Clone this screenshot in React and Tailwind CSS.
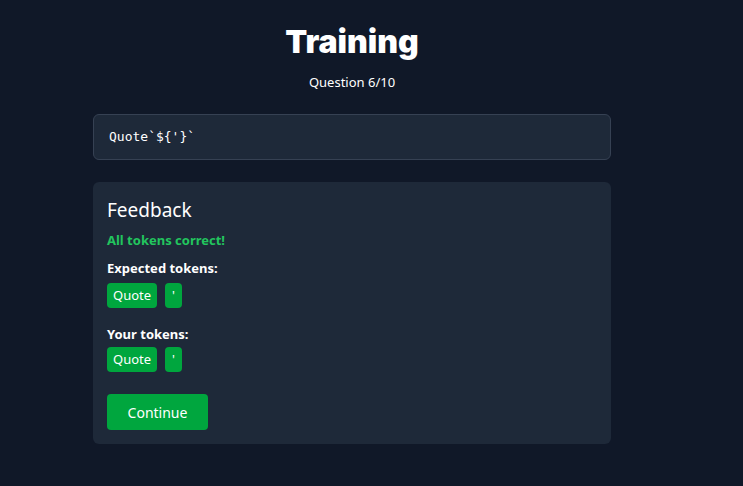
import React from "react";

const EXPECTED = ["Quote", "'"];
const YOURS = ["Quote", "'"];

function Tokens({ items }) {
  return (
    <div className="flex gap-2">
      {items.map((t, i) => (
        <span key={i} className="h-[25px] min-w-[17px] px-[6px] flex items-center justify-center rounded bg-[#00a63e] text-white text-[13px]">
          {t}
        </span>
      ))}
    </div>
  );
}

export default function App() {
  return (
    <div className="min-h-screen bg-[#101828] text-white" style={{ fontFamily: '"Noto Sans", "Open Sans", sans-serif' }}>
      <div className="w-[704px] pt-[22px]">
        <div className="mx-auto w-[518px]">
          <h1 className="text-center text-[32px] leading-[40px] font-black" style={{ fontFamily: "Inter, sans-serif" }}>
            Training
          </h1>
          <p className="text-center text-[13px] mt-[10px] leading-5">Question 6/10</p>

          <div className="mt-[22px] h-[46px] px-[15px] flex items-center rounded-md border border-[#364153] bg-[#1e2939] text-[13px]" style={{ fontFamily: '"DejaVu Sans Mono", monospace' }}>
            {"Quote`${'}`"}
          </div>

          <div className="mt-[22px] rounded-md bg-[#1e2939] px-[14px] pt-[14px] pb-[14px]">
            <h2 className="text-[19px] leading-[28px] font-normal">Feedback</h2>
            <p className="mt-[6px] text-[13px] leading-5 font-bold text-[#22c55e]">All tokens correct!</p>
            <p className="mt-[8px] text-[13px] leading-5 font-bold">Expected tokens:</p>
            <div className="mt-[5px]"><Tokens items={EXPECTED} /></div>
            <p className="mt-[16px] text-[13px] leading-5 font-bold">Your tokens:</p>
            <div className="mt-[3px]"><Tokens items={YOURS} /></div>
            <button className="mt-[22px] h-[36px] w-[101px] rounded bg-[#00a63e] text-white text-[14px]">Continue</button>
          </div>
        </div>
      </div>
    </div>
  );
}
